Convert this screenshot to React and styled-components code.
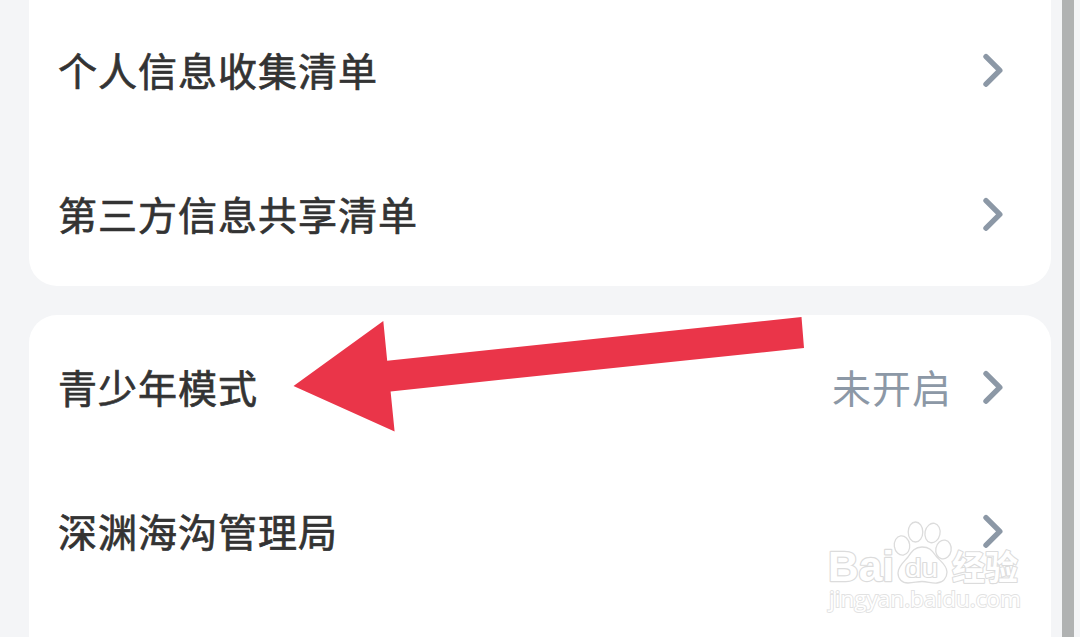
import React from 'react';
import styled, { createGlobalStyle } from 'styled-components';

const GlobalStyle = createGlobalStyle`
    * {
        box-sizing: border-box;
    }

    body {
        margin: 0;
        overflow: hidden;
        background-color: #f4f5f7;
        font-family: "Noto Sans CJK SC", "Liberation Sans", sans-serif;
    }
`;

const privacyItems = [
    { label: '个人信息收集清单' },
    { label: '第三方信息共享清单' },
]

const modeItems = [
    { label: '青少年模式', value: '未开启' },
    { label: '深渊海沟管理局' },
]

function Chevron() {
    return (
        <ChevronIcon viewBox="0 0 20 34">
            <path d="M3 3.6 L16.8 17.4 L3 31.2" />
        </ChevronIcon>
    )
}

function SettingsRow({ item }) {
    return (
        <Row>
            <Label>{item.label}</Label>
            {item.value && <Value>{item.value}</Value>}
            <Chevron />
        </Row>
    )
}

function Arrow() {
    return (
        <ArrowSvg viewBox="290 314 518 120">
            <path d="M293.5 386 L383.3 321 L387.2 360.8 L801.5 317 L804 348 L390.6 391.4 L394.6 431.5 Z" />
        </ArrowSvg>
    )
}

function Watermark() {
    return (
        <WatermarkSvg viewBox="820 515 210 105">
            <g>
                <ellipse cx="902" cy="545.5" rx="7.7" ry="9.7" transform="rotate(-8 902 545.5)" />
                <ellipse cx="915.5" cy="532" rx="7.3" ry="10" />
                <ellipse cx="932.5" cy="533" rx="7.5" ry="9.8" transform="rotate(12 932.5 533)" />
                <ellipse cx="943.5" cy="549.5" rx="7.7" ry="9.5" transform="rotate(10 943.5 549.5)" />
                <path d="M922 547 C915 547 912 551 908 557 C904 562 898 566 898 573 C898 579 902 583 908 583 C914 583 917 581.5 922 581.5 C928 581.5 931 583.5 937 583 C943 582.5 947 578 947 572 C947 565 940 561 936 556 C932 550 929 547 922 547 Z" />
            </g>
            <Brand x="828" y="581" $size={42} $outline={2.4} textLength="66" lengthAdjust="spacingAndGlyphs">Bai</Brand>
            <Brand x="905" y="577" $size={26} $weight={400} $outline={2.2} textLength="33" lengthAdjust="spacingAndGlyphs">du</Brand>
            <Brand x="952" y="579.5" $size={34} $cjk $outline={2.2} textLength="66" lengthAdjust="spacingAndGlyphs">经验</Brand>
            <Site x="829" y="607" textLength="192" lengthAdjust="spacingAndGlyphs">jingyan.baidu.com</Site>
        </WatermarkSvg>
    )
}

export default function App() {
    return (
        <Screen>
            <GlobalStyle />
            <List>
                <Card $first>
                    {privacyItems.map((item) => <SettingsRow key={item.label} item={item} />)}
                </Card>
                <Card>
                    {modeItems.map((item) => <SettingsRow key={item.label} item={item} />)}
                </Card>
            </List>
            <Scrollbar />
            <Arrow />
            <Watermark />
        </Screen>
    )
}

const Screen = styled.div`
    position: relative;
    width: 1080px;
    height: 637px;
    display: flex;
    overflow: hidden;
    background-color: #f4f5f7;
`;

const List = styled.div`
    flex: 1;
    display: flex;
    flex-direction: column;
    gap: 29px;
    margin-top: -2px;
    padding: 0 11px 0 29px;
`;

const Card = styled.div`
    flex: ${({ $first }) => ($first ? '0 0 auto' : '1')};
    display: flex;
    flex-direction: column;
    border-radius: ${({ $first }) => ($first ? '0 0 28px 28px' : '28px 28px 0 0')};
    background-color: #ffffff;
`;

const Row = styled.div`
    flex: 0 0 144px;
    display: flex;
    align-items: center;
    padding: 0 48px 0 29px;
`;

const Label = styled.span`
    flex: 1;
    padding-bottom: 2px;
    font-size: 39px;
    line-height: 58px;
    letter-spacing: 1px;
    color: #333333;
    -webkit-text-stroke: 0.7px #333333;
`;

const Value = styled.span`
    margin-right: 31px;
    padding-bottom: 2px;
    font-size: 39px;
    line-height: 58px;
    letter-spacing: 1px;
    color: #8c98a6;
`;

const ChevronIcon = styled.svg`
    width: 20px;
    height: 34px;

    path {
        fill: none;
        stroke: #8c98a6;
        stroke-width: 5.4;
        stroke-linecap: round;
        stroke-linejoin: round;
    }
`;

const Scrollbar = styled.div`
    width: 12px;
    margin-right: 6px;
    background-color: #b0b2b2;
`;

const ArrowSvg = styled.svg`
    position: absolute;
    left: 290px;
    top: 314px;
    width: 518px;
    height: 120px;
    fill: #ea3549;
`;

const WatermarkSvg = styled.svg`
    position: absolute;
    left: 820px;
    top: 515px;
    width: 210px;
    height: 105px;
    fill: #ffffff;
    stroke: #dcdcdc;
    stroke-width: 1.3;
`;

const Brand = styled.text`
    font-family: ${({ $cjk }) => ($cjk ? '"Noto Sans CJK SC"' : '"Liberation Sans"')}, sans-serif;
    font-size: ${({ $size }) => $size}px;
    font-weight: ${({ $weight = 700 }) => $weight};
    stroke-width: ${({ $outline }) => $outline};
    stroke-linejoin: round;
    paint-order: stroke;
`;

const Site = styled.text`
    font-family: "Open Sans", "Noto Sans", sans-serif;
    font-size: 22px;
    stroke: #e2e2e2;
    stroke-width: 1.8;
    paint-order: stroke;
`;
